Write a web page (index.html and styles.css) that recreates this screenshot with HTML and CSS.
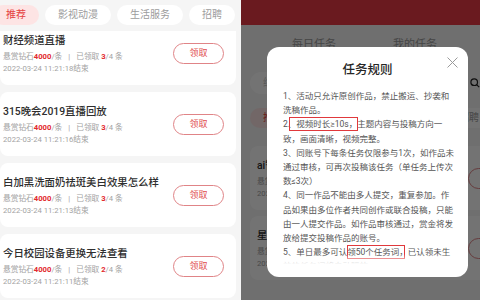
FILE: index.html
```html
<!DOCTYPE html>
<html lang="zh-CN">
<head>
<meta charset="utf-8">
<title>任务规则</title>
<link rel="stylesheet" href="styles.css">
</head>
<body>
<div class="screen">
  <section class="panel-list">
    <nav class="tabs">
      <span class="tab tab-active">推荐</span>
      <span class="tab">影视动漫</span>
      <span class="tab">生活服务</span>
      <span class="tab">招聘</span>
    </nav>
    <div class="list-viewport">
      <div class="list">
        <div class="card">
          <div class="card-info">
            <div class="card-title">财经频道直播</div>
            <div class="card-meta">悬赏钻石<b class="red">4000</b>/条<span class="sep">|</span>已领取 <b class="red">3</b>/4 条</div>
            <div class="card-date">2022-03-24 11:21:18结束</div>
          </div>
          <span class="btn">领取</span>
        </div>
        <div class="card">
          <div class="card-info">
            <div class="card-title">315晚会2019直播回放</div>
            <div class="card-meta">悬赏钻石<b class="red">4000</b>/条<span class="sep">|</span>已领取 <b class="red">3</b>/4 条</div>
            <div class="card-date">2022-03-24 11:21:16结束</div>
          </div>
          <span class="btn">领取</span>
        </div>
        <div class="card">
          <div class="card-info">
            <div class="card-title">白加黑洗面奶祛斑美白效果怎么样</div>
            <div class="card-meta">悬赏钻石<b class="red">4000</b>/条<span class="sep">|</span>已领取 <b class="red">3</b>/4 条</div>
            <div class="card-date">2022-03-24 11:21:13结束</div>
          </div>
          <span class="btn">领取</span>
        </div>
        <div class="card">
          <div class="card-info">
            <div class="card-title">今日校园设备更换无法查看</div>
            <div class="card-meta">悬赏钻石<b class="red">4000</b>/条<span class="sep">|</span>已领取 <b class="red">2</b>/4 条</div>
            <div class="card-date">2022-03-24 11:21:11结束</div>
          </div>
          <span class="btn">领取</span>
        </div>
      </div>
    </div>
  </section>

  <section class="panel-modal">
    <div class="page">
      <header class="page-header"></header>
      <div class="page-switch">
        <span>每日任务</span>
        <span>我的任务</span>
      </div>
      <div class="search">
        <div class="search-box">综合搜索</div>
        <svg class="search-icon" width="10" height="10" viewBox="0 0 10 10"><circle cx="4.2" cy="4.2" r="3.3" fill="none" stroke="#222" stroke-width="1.2"/><line x1="6.6" y1="6.6" x2="9.2" y2="9.2" stroke="#222" stroke-width="1.2"/></svg>
      </div>
      <nav class="tabs tabs-page">
        <span class="tab tab-active">推荐</span>
        <span class="tab">影视动漫</span>
        <span class="tab">生活服务</span>
        <span class="tab">招聘</span>
      </nav>
      <div class="list list-page">
        <div class="card card-page">
          <div class="card-info">
            <div class="card-title">ai智能写作工具推荐</div>
            <div class="card-meta">悬赏钻石<b class="red">4000</b>/条<span class="sep">|</span>已领取 <b class="red">3</b>/4 条</div>
            <div class="card-date">2022-03-24 11:21:08结束</div>
          </div>
          <span class="btn">领取</span>
        </div>
        <div class="card card-page">
          <div class="card-info">
            <div class="card-title">星巴克新品测评</div>
            <div class="card-meta">悬赏钻石<b class="red">4000</b>/条<span class="sep">|</span>已领取 <b class="red">3</b>/4 条</div>
            <div class="card-date">2022-03-24 11:21:05结束</div>
          </div>
          <span class="btn">领取</span>
        </div>
      </div>
    </div>

    <div class="overlay">
      <div class="modal">
        <svg class="modal-close" width="11" height="11" viewBox="0 0 11 11"><path d="M0.5 0.5 L10.5 10.5 M10.5 0.5 L0.5 10.5" stroke="#9a9a9a" stroke-width="1" fill="none"/></svg>
        <h2 class="modal-title">任务规则</h2>
        <div class="modal-body">
          <p>1、活动只允许原创作品，禁止搬运、抄袭和<br>洗稿作品。</p>
          <p>2、<span class="mark mark-a">视频时长≥10s，</span>主题内容与投稿方向一<br>致，画面清晰，视频完整。</p>
          <p>3、同账号下每条任务仅限参与1次，如作品未<br>通过审核，可再次投稿该任务（单任务上传次<br>数≤3次）</p>
          <p>4、同一作品不能由多人提交，重复参加。作<br>品如果由多位作者共同创作或联合投稿，只能<br>由一人提交作品。如作品审核通过，赏金将发<br>放给提交投稿作品的账号。</p>
          <p>5、单日最多可认<span class="mark mark-b">领50个任务词，</span>已认领未生<br>效的任务词将自动释放。</p>
        </div>
      </div>
    </div>
  </section>
</div>
</body>
</html>
```

FILE: styles.css
```css
* { box-sizing: border-box; }

html, body {
  margin: 0;
  padding: 0;
}

body {
  width: 480px;
  height: 300px;
  overflow: hidden;
  font-family: Roboto, "Noto Sans CJK SC", sans-serif;
  background: #f5f5f5;
}

.screen {
  display: flex;
  width: 480px;
  height: 300px;
}

/* ---------- left panel ---------- */
.panel-list {
  flex: none;
  width: 241px;
  height: 300px;
  overflow: hidden;
  background: #f5f5f5;
}

.tabs {
  display: flex;
  gap: 6px;
  margin-left: -7px;
  padding-top: 5px;
  white-space: nowrap;
}

.tab {
  flex: none;
  height: 20px;
  line-height: 20px;
  padding: 0 13px;
  border-radius: 10px;
  background: #fff;
  color: #9c9c9c;
  font-size: 10px;
}

.tab-active {
  background: #fde4e4;
  color: #e5403f;
}

.list-viewport {
  margin-top: 6px;
  height: 269px;
  overflow: hidden;
}

.list {
  display: flex;
  flex-direction: column;
  gap: 7px;
  width: 236px;
  margin-top: -10px;
}

.card {
  flex: none;
  display: flex;
  align-items: center;
  justify-content: space-between;
  height: 64px;
  padding: 0 12px 0 3px;
  border-radius: 8px;
  background: #fff;
}

.card-info {
  align-self: flex-start;
  padding-top: 13px;
  white-space: nowrap;
}

.card-title {
  font-size: 10.4px;
  line-height: 14px;
  color: #2e2e2e;
  font-weight: 500;
}

.card-meta {
  margin-top: 3px;
  font-size: 7.7px;
  line-height: 12px;
  color: #a3a3a3;
}

.card-date {
  font-size: 7.7px;
  line-height: 12px;
  color: #a3a3a3;
}

.red {
  color: #e2282b;
  font-weight: 700;
}

.sep {
  margin: 0 6px;
}

.btn {
  flex: none;
  width: 51px;
  height: 21px;
  line-height: 19px;
  text-align: center;
  border: 1px solid #e08487;
  border-radius: 11px;
  color: #df4f52;
  font-size: 9px;
}

/* ---------- right panel ---------- */
.panel-modal {
  position: relative;
  flex: 1;
  height: 300px;
  overflow: hidden;
}

.page {
  height: 300px;
  background: #f5f5f5;
}

.page-header {
  height: 25px;
  background: #ec3a45;
}

.page-switch {
  display: flex;
  gap: 57px;
  padding: 13px 0 0 51px;
  font-size: 11px;
  line-height: 14px;
  color: #9a9a9a;
}

.search {
  display: flex;
  align-items: center;
  gap: 15px;
  margin: 20px 0 0 9px;
  height: 22px;
}

.search-box {
  flex: none;
  width: 205px;
  height: 22px;
  line-height: 22px;
  padding-left: 13px;
  border-radius: 11px;
  background: #fff;
  color: #c4c4c4;
  font-size: 10px;
}

.search-icon {
  flex: none;
}

.tabs-page {
  margin: 14px 0 0 9px;
  padding-top: 0;
}

.list-page {
  width: auto;
  margin: 18px 0 0 9px;
  gap: 6px;
}

.card-page {
  width: 281px;
  padding-left: 7px;
}

.overlay {
  position: absolute;
  inset: 0;
  padding: 47px 0 0 26px;
  background: rgba(0, 0, 0, 0.55);
}

.modal {
  position: relative;
  width: 201px;
  height: 230px;
  padding-top: 13px;
  border-radius: 12px;
  background: #fff;
}

.modal-close {
  position: absolute;
  top: 10px;
  right: 10px;
}

.modal-title {
  margin: 0;
  font-size: 12.5px;
  line-height: 20px;
  font-weight: 500;
  color: #262626;
  text-align: center;
}

.modal-body {
  position: relative;
  height: 177px;
  margin-top: 9px;
  padding: 0 10px 0 16px;
  overflow: hidden;
  font-size: 8.5px;
  line-height: 14.2px;
  color: #555;
  white-space: nowrap;
}

.modal-body::after {
  content: "";
  position: absolute;
  left: 0;
  right: 0;
  bottom: 0;
  height: 12px;
  background: linear-gradient(rgba(255, 255, 255, 0), #fff 85%);
}

.modal-body p {
  margin: 0;
}

.mark {
  position: relative;
}

.mark::after {
  content: "";
  position: absolute;
  top: -2px;
  bottom: -2px;
  border: 1px solid #e0393c;
}

.mark-a::after {
  left: -7px;
  right: -1px;
}

.mark-b::after {
  left: 0;
  right: 3px;
}
```
